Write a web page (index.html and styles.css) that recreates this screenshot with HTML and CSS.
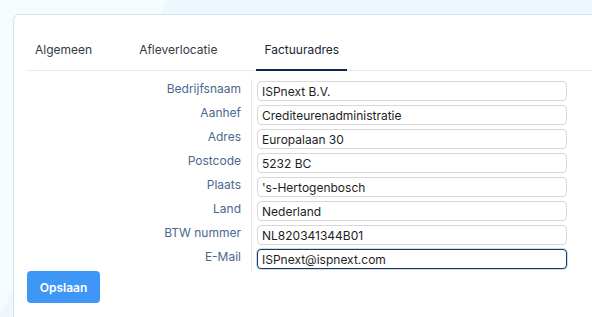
FILE: index.html
```html
<!DOCTYPE html>
<html lang="nl">
<head>
<meta charset="utf-8">
<title>Factuuradres</title>
<link rel="stylesheet" href="styles.css">
</head>
<body>
<div class="page">
  <div class="card">
    <nav class="tabs">
      <span class="tab">Algemeen</span>
      <span class="tab">Afleverlocatie</span>
      <span class="tab active">Factuuradres</span>
    </nav>
    <form class="form">
      <div class="row"><label class="label">Bedrijfsnaam</label><div class="field"><input class="input" value="ISPnext B.V."></div></div>
      <div class="row"><label class="label">Aanhef</label><div class="field"><input class="input" value="Crediteurenadministratie"></div></div>
      <div class="row"><label class="label">Adres</label><div class="field"><input class="input" value="Europalaan 30"></div></div>
      <div class="row"><label class="label">Postcode</label><div class="field"><input class="input" value="5232 BC"></div></div>
      <div class="row"><label class="label">Plaats</label><div class="field"><input class="input" value="'s-Hertogenbosch"></div></div>
      <div class="row"><label class="label">Land</label><div class="field"><input class="input" value="Nederland"></div></div>
      <div class="row"><label class="label">BTW nummer</label><div class="field"><input class="input" value="NL820341344B01"></div></div>
      <div class="row"><label class="label">E-Mail</label><div class="field"><input class="input focus" value="ISPnext@ispnext.com"></div></div>
    </form>
    <button class="btn" type="button">Opslaan</button>
  </div>
</div>
</body>
</html>
```
FILE: styles.css
```css
html, body {
  margin: 0;
  padding: 0;
  height: 100%;
  overflow: hidden;
}
body {
  font-family: Inter, "Noto Sans", sans-serif;
  font-size: 12px;
  background: linear-gradient(118deg, #f6fbfe 0, #f6fbfe 22%, #edf7fd 22%, #edf7fd 100%);
}
.page {
  padding: 14px 0 0 13px;
}
.card {
  height: 303px;
  box-sizing: border-box;
  background: #fff;
  border: 1px solid #cfe5f6;
  border-right: none;
  border-bottom: none;
  border-radius: 6px 0 0 0;
  padding: 0 0 0 13px;
}
.tabs {
  display: flex;
  gap: 31px;
  padding-top: 27px;
  border-bottom: 1px solid #e9e9e9;
}
.tab {
  padding: 0 8px;
  height: 28px;
  line-height: 16px;
  color: #333a44;
  box-sizing: border-box;
}
.tab.active {
  color: #17253a;
  border-bottom: 2px solid #10294a;
  height: 29px;
  margin-bottom: -1px;
}
.form {
  margin: 8px 0 0;
  display: flex;
  flex-direction: column;
}
.row {
  display: flex;
  height: 24px;
}
.label {
  width: 225px;
  flex: none;
  box-sizing: border-box;
  padding-right: 10px;
  text-align: right;
  line-height: 20px;
  color: #4a6890;
  border-right: 1px solid #e6e6e6;
}
.field {
  padding: 2px 0 0 5px;
}
.input {
  display: block;
  width: 310px;
  height: 20px;
  box-sizing: border-box;
  border: 1px solid #d8d8d8;
  border-radius: 4px;
  padding: 0 4px;
  font-family: Inter, "Noto Sans", sans-serif;
  font-size: 12px;
  color: #1e1e1e;
  background: #fff;
  outline: none;
}
.input.focus {
  border: 1px solid #1d3a5c;
  box-shadow: 0 0 0 1px #c9dcef;
}
.btn {
  display: block;
  margin-top: 0;
  width: 73px;
  height: 32px;
  border: none;
  border-radius: 4px;
  background: #3e97f7;
  color: #fff;
  font-family: Inter, "Noto Sans", sans-serif;
  font-size: 12px;
  font-weight: 600;
  padding: 0;
}
```
